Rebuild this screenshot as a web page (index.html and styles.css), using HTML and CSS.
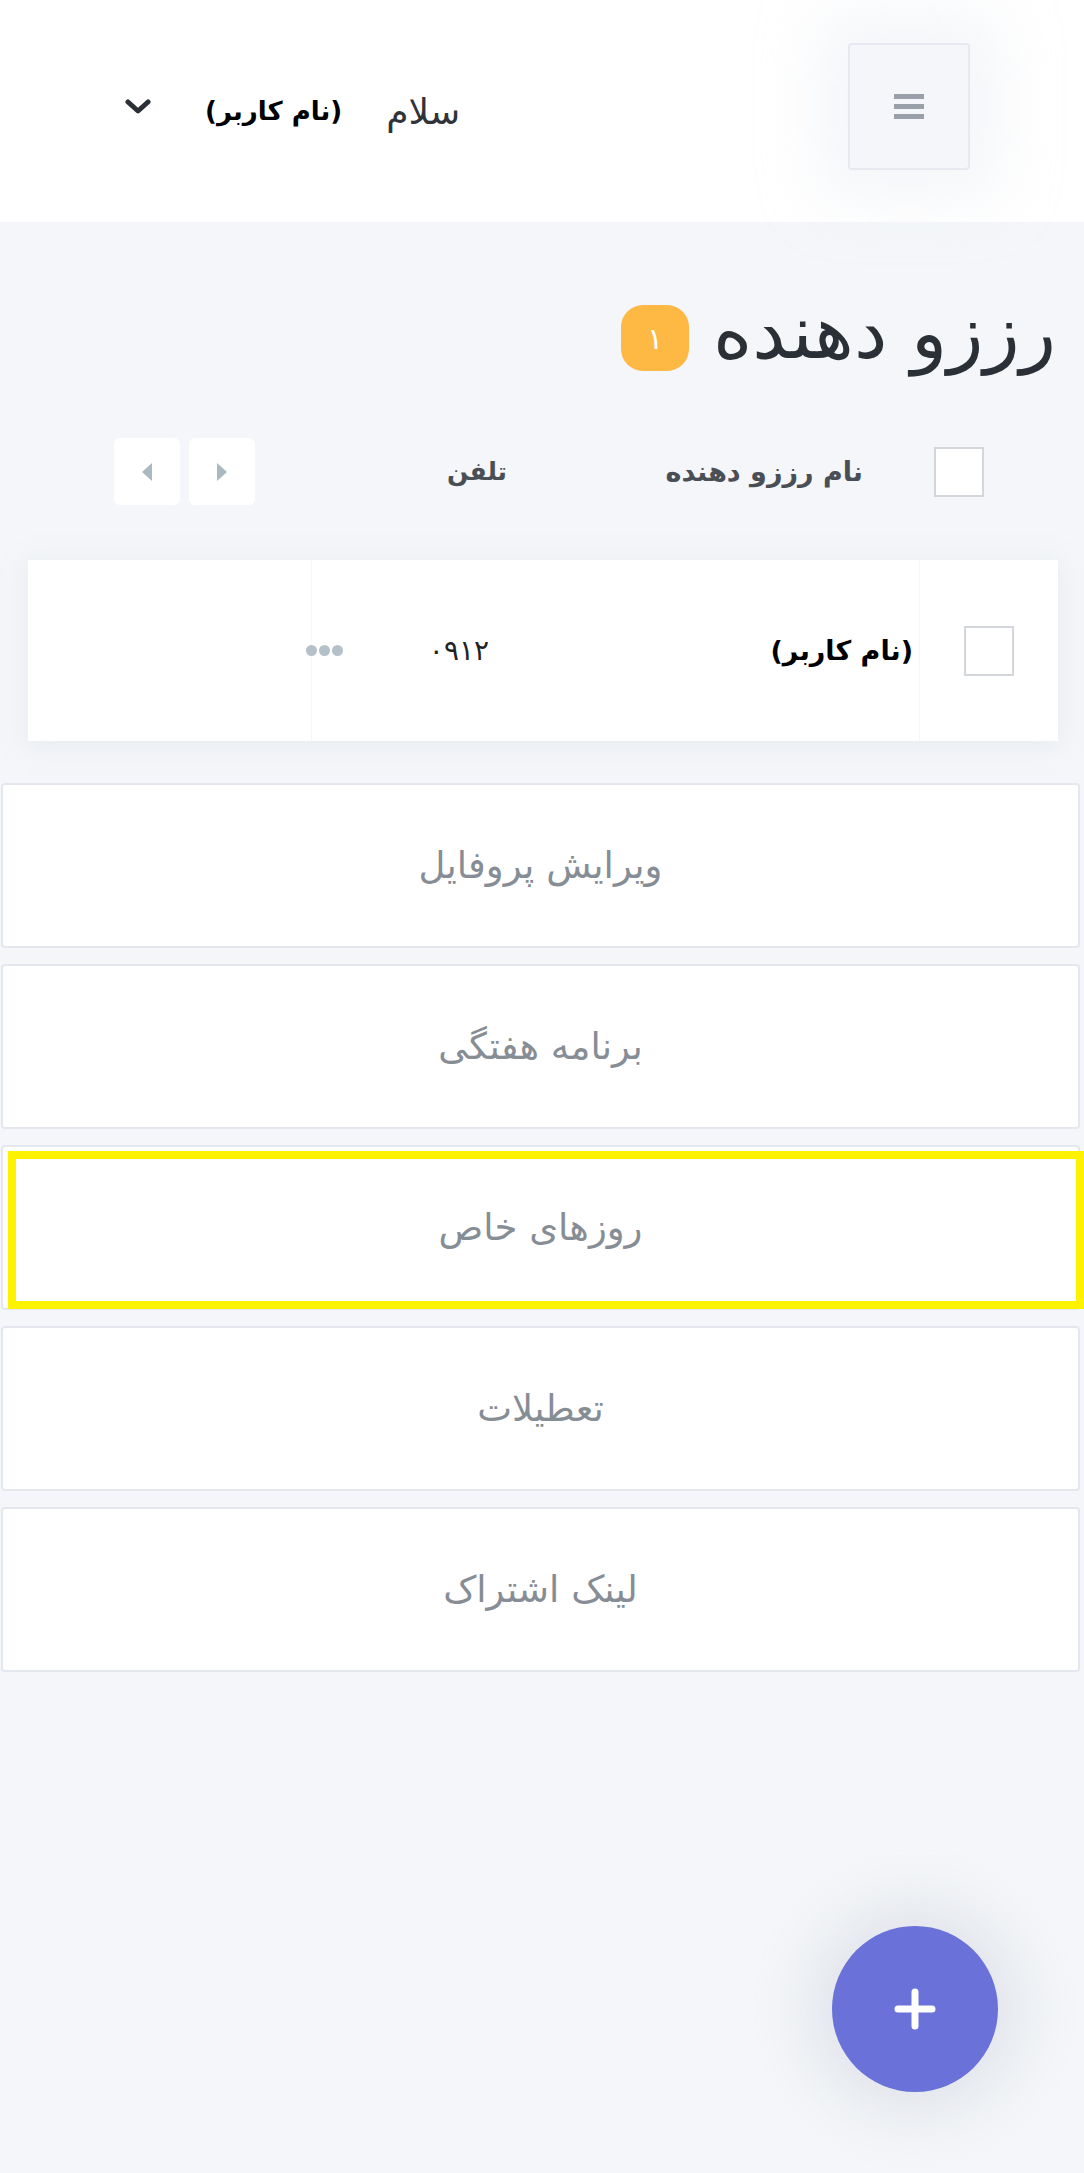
FILE: index.html
```html
<!DOCTYPE html>
<html lang="fa" dir="rtl">
<head>
<meta charset="utf-8">
<title>رززو دهنده</title>
<link rel="stylesheet" href="styles.css">
</head>
<body>
<header class="topbar">
  <button class="menu-btn" aria-label="menu">
    <span class="bar"></span><span class="bar"></span><span class="bar"></span>
  </button>
  <div class="user">
    <span class="hello">سلام</span>
    <span class="uname">(نام کاربر)</span>
    <svg class="chev" width="26" height="18" viewBox="0 0 26 18"><path d="M3 4 L13 13 L23 4" fill="none" stroke="#2b2f36" stroke-width="5" stroke-linecap="round" stroke-linejoin="round"/></svg>
  </div>
</header>

<main class="content">
  <div class="title-row">
    <h1 class="title">رززو دهنده</h1>
    <span class="badge">۱</span>
  </div>

  <div class="thead">
    <span class="check"></span>
    <span class="th th-name">نام رززو دهنده</span>
    <span class="th th-phone">تلفن</span>
    <div class="pager">
      <span class="pbtn"><svg width="12" height="20" viewBox="0 0 12 20"><path d="M1 1 L11 10 L1 19 Z" fill="#a9b9c1"/></svg></span>
      <span class="pbtn"><svg width="12" height="20" viewBox="0 0 12 20"><path d="M11 1 L1 10 L11 19 Z" fill="#a9b9c1"/></svg></span>
    </div>
  </div>

  <div class="row-card">
    <div class="cell cell-check"><span class="check"></span></div>
    <div class="cell cell-main">
      <span class="rname">(نام کاربر)</span>
      <span class="rphone">۰۹۱۲</span>
      <span class="dots"><i></i><i></i><i></i></span>
    </div>
    <div class="cell cell-empty"></div>
  </div>
</main>

<nav class="menu">
  <a class="menu-card">ویرایش پروفایل</a>
  <a class="menu-card">برنامه هفتگی</a>
  <a class="menu-card selected">روزهای خاص</a>
  <a class="menu-card">تعطیلات</a>
  <a class="menu-card">لینک اشتراک</a>
</nav>

<button class="fab" aria-label="add">
  <svg width="42" height="42" viewBox="0 0 42 42"><path d="M21 4 V38 M4 21 H38" stroke="#fff" stroke-width="7" stroke-linecap="round"/></svg>
</button>
</body>
</html>
```

FILE: styles.css
```css
* { box-sizing: border-box; }
html, body { margin: 0; padding: 0; }
body {
  background: #f4f6f9;
  font-family: "DejaVu Sans", "Noto Sans", sans-serif;
  color: #2b2f36;
  min-height: 2173px;
}

.topbar {
  height: 222px;
  background: #fff;
  display: flex;
  align-items: center;
  justify-content: space-between;
  padding: 0 114px 0 125px;
}
.menu-btn {
  width: 122px;
  height: 127px;
  margin-top: -10px;
  background: #f5f6f9;
  border: 2px solid #e6e9ef;
  border-radius: 4px;
  box-shadow: 0 0 60px 30px rgba(240, 242, 246, 0.7);
  display: flex;
  flex-direction: column;
  align-items: center;
  justify-content: center;
  gap: 5px;
  padding: 0;
}
.bar { display: block; width: 30px; height: 5px; background: #99a0a9; }
.user { display: flex; align-items: center; }
.hello { font-size: 36px; color: #30343a; margin-left: 44px; }
.uname { font-size: 26px; font-weight: bold; color: #000; margin-left: 54px; }
.chev { display: block; margin-top: -8px; }

.content { padding: 0 26px 0 26px; }
.title-row {
  display: flex;
  align-items: center;
  height: 66px;
  margin-top: 83px;
  padding-right: 2px;
  gap: 24px;
}
.title { margin: 0; font-size: 75px; font-weight: normal; color: #2b2f36; line-height: 1; position: relative; top: -6px; }
.badge {
  width: 68px; height: 66px;
  border-radius: 22px;
  background: #fdb944;
  color: #fff;
  font-size: 30px;
  display: flex; align-items: center; justify-content: center;
}

.thead {
  display: flex;
  align-items: center;
  height: 67px;
  margin-top: 67px;
}
.check {
  display: block;
  width: 50px; height: 50px;
  background: #fff;
  border: 2px solid #d3d7db;
}
.thead .check { margin-right: 74px; }
.th { font-size: 25px; font-weight: bold; color: #4a4f56; }
.th-name { font-size: 27px; margin-right: 71px; width: 356px; }
.pager { margin-right: auto; margin-left: 88px; display: flex; gap: 9px; }
.pbtn {
  width: 66px; height: 67px;
  background: #fff;
  border-radius: 6px;
  display: flex; align-items: center; justify-content: center;
}

.row-card {
  margin-top: 55px;
  margin-left: 2px;
  height: 181px;
  background: #fff;
  display: grid;
  grid-template-columns: 139px 608px 1fr;
  box-shadow: 0 4px 20px rgba(220, 224, 232, 0.5);
}
.cell { display: flex; align-items: center; }
.cell-check { justify-content: center; border-left: 1px solid #f6f7f9; }
.cell-main { border-left: 1px solid #f6f7f9; padding-right: 6px; }
.cell-main > * { flex-shrink: 0; }
.rname { width: 424px; font-size: 27px; font-weight: bold; color: #000; }
.rphone { width: 146px; font-size: 28px; color: #222; }
.dots { display: flex; gap: 2px; }
.dots i { display: block; width: 11px; height: 11px; border-radius: 50%; background: #b4c1c8; }

.menu {
  margin-top: 42px;
  display: flex;
  flex-direction: column;
  gap: 16px;
  padding: 0 4px 0 1px;
}
.menu-card {
  position: relative;
  height: 165px;
  background: #fff;
  border: 2px solid #e4e7ee;
  border-radius: 4px;
  display: flex; align-items: center; justify-content: center;
  font-size: 37px;
  color: #868d95;
}
.menu-card.selected::after {
  content: "";
  position: absolute;
  top: 4px; left: 5px; right: -6px; bottom: -1px;
  border: 8px solid #fff200;
}

.fab {
  position: fixed;
  right: 86px;
  bottom: 81px;
  width: 166px; height: 166px;
  border-radius: 50%;
  border: none;
  background: #6a71d8;
  box-shadow: 0 0 60px 20px rgba(200, 204, 214, 0.45);
  display: flex; align-items: center; justify-content: center;
  padding: 0;
}
.fab svg { display: block; }
```
